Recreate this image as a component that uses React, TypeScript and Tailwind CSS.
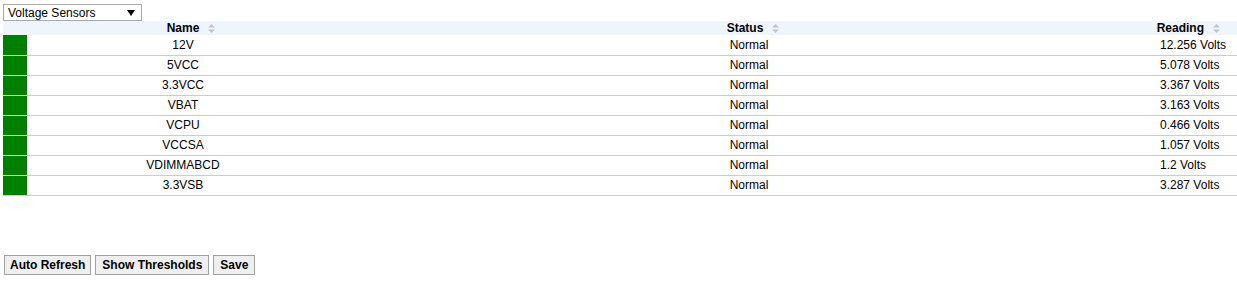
import React from 'react';

const sensors = [
  { name: '12V', status: 'Normal', reading: '12.256 Volts' },
  { name: '5VCC', status: 'Normal', reading: '5.078 Volts' },
  { name: '3.3VCC', status: 'Normal', reading: '3.367 Volts' },
  { name: 'VBAT', status: 'Normal', reading: '3.163 Volts' },
  { name: 'VCPU', status: 'Normal', reading: '0.466 Volts' },
  { name: 'VCCSA', status: 'Normal', reading: '1.057 Volts' },
  { name: 'VDIMMABCD', status: 'Normal', reading: '1.2 Volts' },
  { name: '3.3VSB', status: 'Normal', reading: '3.287 Volts' },
];

function SortIcon() {
  return (
    <svg width="7" height="9" viewBox="0 0 7 9" className="inline-block ml-[9px] align-[-1px]">
      <path d="M3.5 0 L7 3.5 L0 3.5 Z" fill="#c4c4c4" />
      <path d="M0 5.5 L7 5.5 L3.5 9 Z" fill="#c4c4c4" />
    </svg>
  );
}

export default function App() {
  return (
    <div className="w-[1237px] h-[283px] bg-white text-[12px] leading-[14px] text-black" style={{ fontFamily: '"Liberation Sans", Arial, sans-serif' }}>
      <div className="pt-[4px] pl-[3px]">
        <div className="w-[139px] h-[17px] border border-[#a9a9a9] bg-white flex items-center justify-between pl-[4px] pr-[6px]">
          <span>Voltage Sensors</span>
          <svg width="8" height="6" viewBox="0 0 8 6">
            <path d="M0 0 L8 0 L4 6 Z" fill="#000" />
          </svg>
        </div>
      </div>

      <table className="ml-[3px] w-[1234px] table-fixed border-collapse whitespace-nowrap">
        <colgroup>
          <col className="w-[24px]" />
          <col className="w-[312px]" />
          <col className="w-[760px]" />
          <col className="w-[138px]" />
        </colgroup>
        <thead>
          <tr className="bg-[#eff5fd] h-[14px]">
            <th className="p-0"></th>
            <th className="p-0 pl-[16px] text-center font-bold">
              Name
              <SortIcon />
            </th>
            <th className="p-0 pl-[68px] text-center font-bold">
              Status
              <SortIcon />
            </th>
            <th className="p-0 pr-[17px] text-right font-bold">
              Reading
              <SortIcon />
            </th>
          </tr>
        </thead>
        <tbody>
          {sensors.map((s) => (
            <tr key={s.name} className="h-[20px] border-b border-[#cccccc]">
              <td className="p-0 bg-[#008000]"></td>
              <td className="p-0 text-center">{s.name}</td>
              <td className="p-0 pl-[60px] text-center">{s.status}</td>
              <td className="p-0 pl-[61px] text-left">{s.reading}</td>
            </tr>
          ))}
        </tbody>
      </table>

      <div className="flex gap-[4px] pl-[4px] mt-[59px] whitespace-nowrap">
        <button className="h-[20px] px-[5px] border border-[#a0a0a0] bg-[#efefef] font-bold">Auto Refresh</button>
        <button className="h-[20px] px-[6px] border border-[#a0a0a0] bg-[#efefef] font-bold">Show Thresholds</button>
        <button className="h-[20px] px-[6px] border border-[#a0a0a0] bg-[#efefef] font-bold">Save</button>
      </div>
    </div>
  );
}
